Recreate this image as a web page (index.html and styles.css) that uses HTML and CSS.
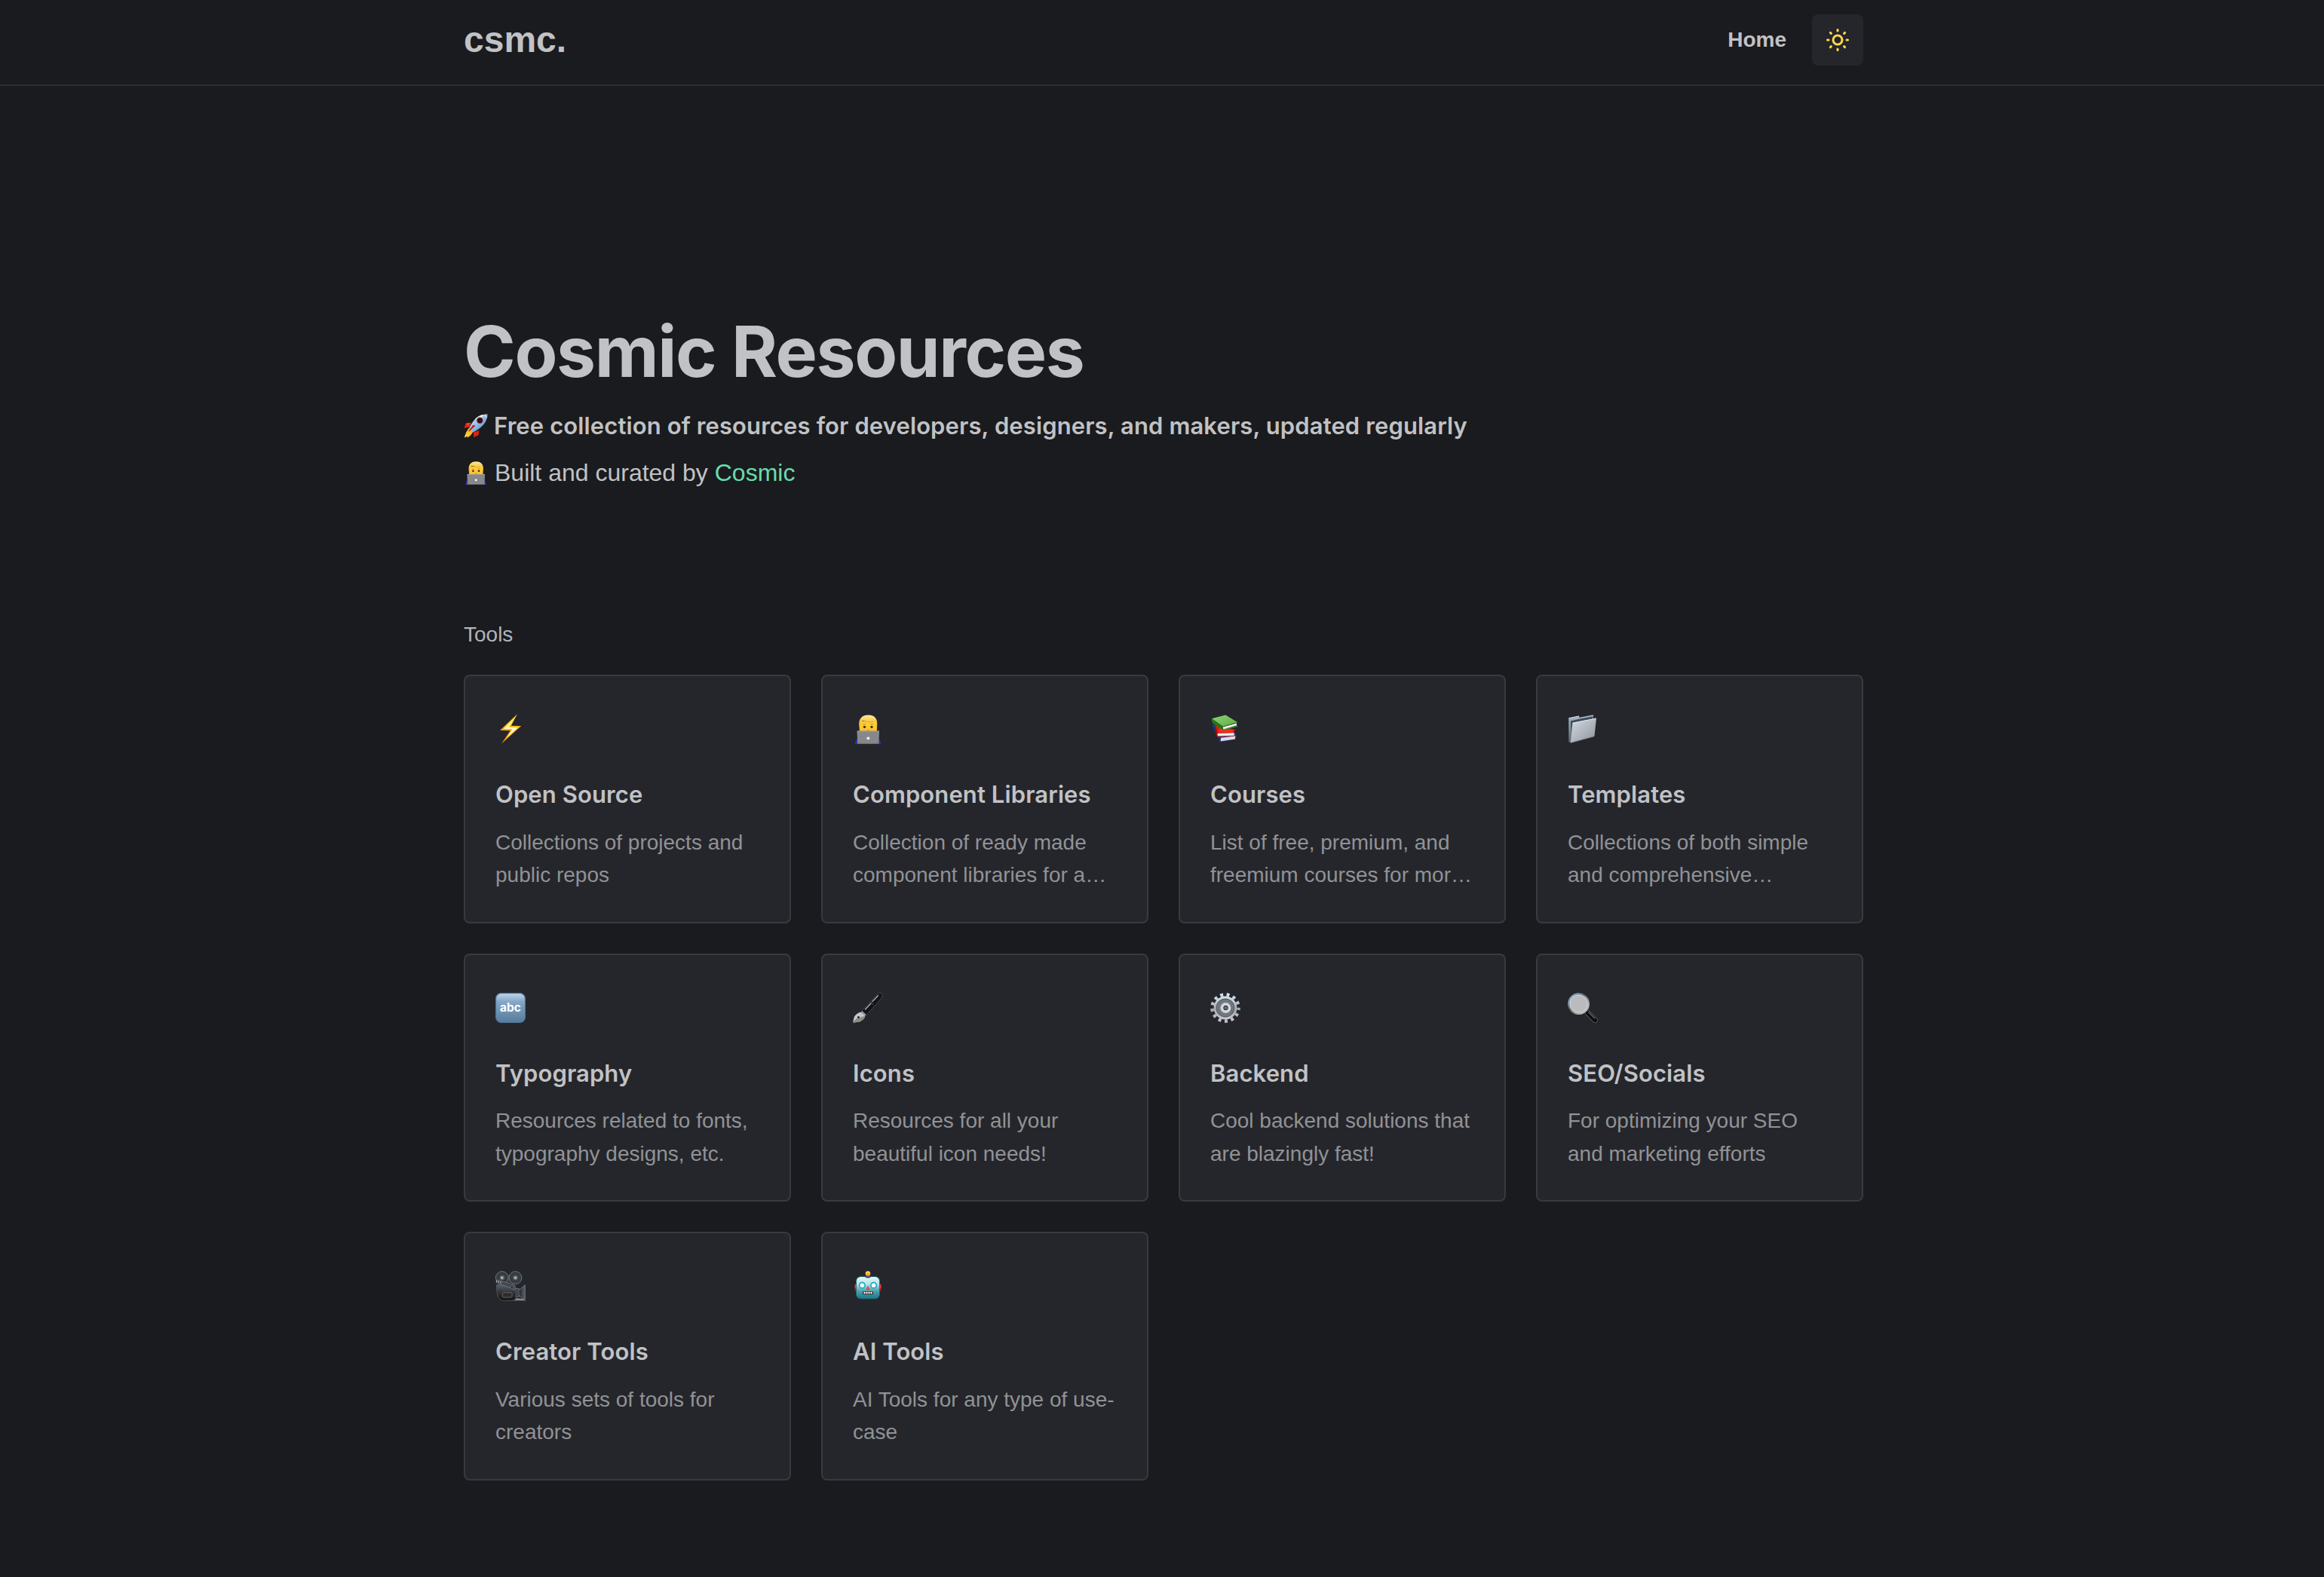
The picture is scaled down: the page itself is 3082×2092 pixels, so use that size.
FILE: index.html
```html
<!DOCTYPE html>
<html lang="en">
<head>
<meta charset="utf-8">
<title>Cosmic Resources</title>
<link rel="stylesheet" href="styles.css">
</head>
<body>
<svg class="defs" width="0" height="0" aria-hidden="true">
  <defs>
    <linearGradient id="hair" x1="0" y1="0" x2="0" y2="1"><stop offset="0" stop-color="#ffe9a0"/><stop offset=".35" stop-color="#fbd35c"/><stop offset="1" stop-color="#eda51c"/></linearGradient>
    <linearGradient id="face" x1="0" y1="0" x2="0" y2="1"><stop offset="0" stop-color="#ffd23c"/><stop offset="1" stop-color="#fbb91f"/></linearGradient>
    <linearGradient id="bolt" x1="0" y1="0" x2="0" y2="1"><stop offset="0" stop-color="#ffd21f"/><stop offset="1" stop-color="#ff9500"/></linearGradient>
    <linearGradient id="green" x1="0" y1="0" x2="1" y2="1"><stop offset="0" stop-color="#8fcf76"/><stop offset="1" stop-color="#5cb043"/></linearGradient>
    <linearGradient id="folder" x1="0" y1="0" x2="1" y2="1"><stop offset="0" stop-color="#d3dae2"/><stop offset=".5" stop-color="#b3b8c0"/><stop offset="1" stop-color="#8c9197"/></linearGradient>
    <linearGradient id="folderback" x1="0" y1="0" x2="0" y2="1"><stop offset="0" stop-color="#a9b8c4"/><stop offset="1" stop-color="#56646f"/></linearGradient>
    <linearGradient id="abc" x1="0" y1="0" x2="0" y2="1"><stop offset="0" stop-color="#c3d8e8"/><stop offset=".27" stop-color="#86a9c8"/><stop offset=".6" stop-color="#6f94b6"/><stop offset="1" stop-color="#5b7b98"/></linearGradient>
    <linearGradient id="steel" x1="0" y1="0" x2="0" y2="1"><stop offset="0" stop-color="#d2dfe8"/><stop offset=".55" stop-color="#a5abb2"/><stop offset="1" stop-color="#c9c3cb"/></linearGradient>
    <linearGradient id="rim" x1="0" y1="0" x2="1" y2="1"><stop offset="0" stop-color="#8fc0e8"/><stop offset=".4" stop-color="#6b7178"/><stop offset="1" stop-color="#d9d4cf"/></linearGradient>
    <linearGradient id="camera" x1="0" y1="0" x2="0" y2="1"><stop offset="0" stop-color="#5d656e"/><stop offset=".5" stop-color="#30353a"/><stop offset="1" stop-color="#180f0e"/></linearGradient>
    <linearGradient id="horn" x1="0" y1="0" x2="1" y2="0"><stop offset="0" stop-color="#22262b"/><stop offset="1" stop-color="#59616a"/></linearGradient>
    <linearGradient id="robot" x1="0" y1="0" x2="0" y2="1"><stop offset="0" stop-color="#e2fbf8"/><stop offset=".35" stop-color="#b4e2e2"/><stop offset=".65" stop-color="#4fa0ac"/><stop offset="1" stop-color="#1b7686"/></linearGradient>
    <linearGradient id="bulb" x1="0" y1="0" x2="0" y2="1"><stop offset="0" stop-color="#ffe55c"/><stop offset="1" stop-color="#f08a10"/></linearGradient>
    <linearGradient id="hull" x1="0" y1="0" x2="1" y2="1"><stop offset="0" stop-color="#dfe8ef"/><stop offset=".45" stop-color="#9cc4e6"/><stop offset="1" stop-color="#3474b4"/></linearGradient>
    <linearGradient id="flame" x1="1" y1="0" x2="0" y2="1"><stop offset="0" stop-color="#ff9d1c"/><stop offset="1" stop-color="#ffe14a"/></linearGradient>
    <symbol id="technologist" viewBox="0 0 40 40">
      <path d="M3 40c.3-4 1.600-7 4.500-8h25c3 1 4.200 4 4.700 8z" fill="#2733c9"/>
      <path d="M8.800 10h23.200v10.500c0 4-4 7-11.700 7S8.800 24.500 8.800 20.500z" fill="url(#face)"/>
      <path d="M8.600 18.500C6.800 7 11.500 1.500 20.500 1.500S33.800 7 32 18.500l-1.200-5.500c-.5-2-1.800-2.600-3.800-2.500-5.300.2-10-.3-14-1.600-1.600 1.600-2.500 4.500-4.400 9.600z" fill="url(#hair)"/>
      <path d="M13 9.100c4 1.400 9 1.900 14.500 1.600" fill="none" stroke="#cf8d15" stroke-width=".6"/>
      <circle cx="15.500" cy="17.300" r="1.600" fill="#3b2408"/><circle cx="25" cy="17.300" r="1.600" fill="#3b2408"/>
      <path d="M13.500 14.200q1.900-1.200 3.600-.3M23.500 13.900q1.900-1 3.600.3" fill="none" stroke="#a86c10" stroke-width=".7"/>
      <path d="M18.600 22h3.400" stroke="#c87420" stroke-width=".8"/>
      <path d="M6.500 22.500h27.500q1.200 0 1.100 1.200L34.300 40H6.300L5.500 23.700q-.1-1.200 1-1.200z" fill="#87888b"/>
      <path d="M6 23h29" stroke="#a3a4a7" stroke-width="1"/><path d="M6.300 39.400h28" stroke="#6c6d70" stroke-width="1.200"/>
      <circle cx="20.400" cy="32.300" r="1.900" fill="#f5f5f6"/>
    </symbol>
  </defs>
</svg>

<header class="header">
  <div class="container header-inner">
    <a class="logo">csmc.</a>
    <nav class="nav">
      <a class="nav-link">Home</a>
      <button class="theme-toggle" aria-label="Toggle theme">
        <svg class="sun" viewBox="0 0 24 24" fill="none" stroke="currentColor" stroke-width="2" stroke-linecap="round" stroke-linejoin="round"><circle cx="12" cy="12" r="4"/><path d="M3 12h1m8-9v1m8 8h1m-9 8v1M5.600 5.600l.7.7m12.100-.7l-.7.7m0 11.400l.7.7m-12.100-.7l-.7.7"/></svg>
      </button>
    </nav>
  </div>
</header>

<main class="container">
  <section class="hero">
    <h1 class="title">Cosmic Resources</h1>
    <p class="lead">
      <svg class="inline-icon" viewBox="0 0 40 40">
        <path d="M12 14.500L3.500 16 .5 23.500l9-1.500zM25.500 27.500L24.500 35l-7.800 4-.5-8z" fill="#e8200f"/>
        <path d="M3.500 16l7-.8-3 3.600z" fill="#ff5a2a"/>
        <path d="M8.500 23.500L4 30.500.8 39.500l5.400-2.200-.4 2.400 5.600-4 4.600-6.700z" fill="url(#flame)"/>
        <path d="M39.500.5C31 .5 23.500 3.500 18.500 9c-4 4.500-7.500 9.500-9.500 15l6.500 6.500c6.500-3 12-6.500 16-11C36.500 14 39 8 39.500.5z" fill="url(#hull)"/>
        <path d="M18.500 9C22 5 27 2.300 32 1.300c0 3-1.200 4.700-3 4.500-3.500.2-7 1.700-10.500 3.200z" fill="#eef1f3"/>
        <path d="M19.500 19.500L9 29.500l-1-1.200 7.500-10z" fill="#c4180c"/>
        <circle cx="26.700" cy="11" r="5.300" fill="#b9151a"/><circle cx="26.700" cy="11" r="4" fill="#131923"/>
        <path d="M34 1.500l4.800 5" stroke="#d3e5f2" stroke-width="1.500"/>
      </svg>
      <span>Free collection of resources for developers, designers, and makers, updated regularly</span>
    </p>
    <p class="byline">
      <svg class="inline-icon"><use href="#technologist"/></svg>
      <span>Built and curated by <a class="link">Cosmic</a></span>
    </p>
  </section>

  <section>
    <h2 class="section-label">Tools</h2>
    <div class="grid">
      <article class="card">
        <svg class="icon" viewBox="0 0 40 40"><path d="M28.800.4L6.200 21.800l13.600.4L8 39.400 34.200 16l-13.300-.3z" fill="url(#bolt)"/><path d="M24.500 6.500L11 19.800l11.900.5-8.400 11.900L29.800 18l-12-.3z" fill="#fffbd0"/><path d="M24.500 6.500L12.700 18.500l5.100-.8z" fill="#fff27a"/></svg>
        <h3 class="card-title">Open Source</h3>
        <p class="card-text">Collections of projects and public repos</p>
      </article>
      <article class="card">
        <svg class="icon"><use href="#technologist"/></svg>
        <h3 class="card-title">Component Libraries</h3>
        <p class="card-text">Collection of ready made component libraries for a…</p>
      </article>
      <article class="card">
        <svg class="icon" viewBox="0 0 40 40">
          <path d="M2.500 15L7 13l5 16 21-3.500 1 2-1.500 1.500.8 4.700L13 37z" fill="#2549a8"/><path d="M13.500 32l20-2.800-.6 4.200L14 36.200z" fill="#dcdcdf"/><path d="M2.500 15l3-1 8.500 18-1 5z" fill="#1a3580"/>
          <path d="M7 14.500l26 6.500-1.500 2.500.6 6L9 30.200z" fill="#d81c12"/><path d="M9.500 26l22-.8v3.600l-22 .4z" fill="#ececee"/><path d="M7 14.500l2.500 11V30L7.500 28z" fill="#9c110b"/><path d="M12 19l19 2.500-1 2.500-19 .8z" fill="#f0301f"/>
          <path d="M2 7L15.500 12l.5 9L3.500 12.500Q1.500 9.500 2 7z" fill="#2b7a1d"/>
          <path d="M16.500 17.500L35 12.500v2.700L17.500 20.500z" fill="#f2f2f2"/>
          <path d="M2 6.200L20.300 1.500 36.300 11.300 17 16.700z" fill="url(#green)"/>
          <path d="M2 6.200l15 10.500v4.800L3.800 12.500Q1.500 9 2 6.200z" fill="#277519"/><path d="M17 21.300l19.400-5.100" stroke="#3b9128" stroke-width="1.300"/><path d="M17 16.700l19-5.200" stroke="#2f811f" stroke-width="1"/>
        </svg>
        <h3 class="card-title">Courses</h3>
        <p class="card-text">List of free, premium, and freemium courses for mor…</p>
      </article>
      <article class="card">
        <svg class="icon" viewBox="0 0 40 40">
          <path d="M1.300 5.800L15 3l.8 1.700L34 1.300V8L5 38.500 1.300 37.500z" fill="url(#folderback)"/><path d="M4 9.500l11.500-2.800 18-3.500V9L5 33z" fill="#3c4c59"/><path d="M1.300 5.800L15 3" stroke="#dce4ea" stroke-width="1"/>
          <path d="M6.400 12.600q.1-.9 1-1.100L37 5.700q1-.1.900.9L35.600 28.700q-.2 1.100-1.200 1.400L4.800 38.300q-1 .2-.9-.8z" fill="url(#folder)"/><path d="M6.400 12.300L37.800 6" stroke="#e9eff4" stroke-width=".8"/><path d="M4 38.200l30.500-8.300" stroke="#868a8e" stroke-width="1"/>
        </svg>
        <h3 class="card-title">Templates</h3>
        <p class="card-text">Collections of both simple and comprehensive…</p>
      </article>
      <article class="card">
        <svg class="icon" viewBox="0 0 40 40"><rect x=".6" y=".6" width="38.800" height="38.800" rx="7" fill="url(#abc)" stroke="#4c769d" stroke-width="1.200"/><text class="abc-label" x="20" y="25" text-anchor="middle">abc</text></svg>
        <h3 class="card-title">Typography</h3>
        <p class="card-text">Resources related to fonts, typography designs, etc.</p>
      </article>
      <article class="card">
        <svg class="icon" viewBox="0 0 40 40">
          <path d="M12 24L31 3.500Q34.500-.1 38.500.4q1.800 3-.8 7L18 29.500z" fill="#111315" stroke="#5f666c" stroke-width=".6"/>
          <path d="M16.500 22L24 14M26 11.500L33.500 3.800" stroke="#a9b2b9" stroke-width="1.400" stroke-linecap="round"/><path d="M23.300 12l4.200 4" stroke="#6c7278" stroke-width=".9"/>
          <path d="M12.500 24.200l5 4.900-1.500 1.400-5-4.900z" fill="#9aa1a6"/>
          <path d="M10.600 25.500l5.800 5.300Q15.500 35 9.500 38.300L.6 39.700.4 38l1.400-6Q4.500 27 10.600 25.500z" fill="#c3c7ca"/><path d="M16.400 30.800Q15.500 35 9.500 38.300L.6 39.700 8 33z" fill="#918a83"/><path d="M1 39l6.300-6.200" stroke="#43474a" stroke-width=".8"/><circle cx="7.500" cy="32.500" r="1.400" fill="#24272a"/>
        </svg>
        <h3 class="card-title">Icons</h3>
        <p class="card-text">Resources for all your beautiful icon needs!</p>
      </article>
      <article class="card">
        <svg class="icon" viewBox="0 0 40 40">
          <circle cx="20" cy="20" r="17.500" fill="none" stroke="url(#steel)" stroke-width="4.600" stroke-dasharray="3.900 4.558" stroke-dashoffset="1"/>
          <circle cx="20" cy="20" r="14" fill="#858b92" stroke="url(#steel)" stroke-width="2.800"/>
          <circle cx="20" cy="20" r="11.500" fill="#7e858c" stroke="#555b62" stroke-width="1.300"/><circle cx="20" cy="20" r="9" fill="none" stroke="#5f656c" stroke-width="1.200"/>
          <circle cx="20.500" cy="20" r="5" fill="#3d4248" stroke="#d3d8dd" stroke-width="3.600"/><circle cx="20.500" cy="20" r="1.600" fill="#777d84"/>
        </svg>
        <h3 class="card-title">Backend</h3>
        <p class="card-text">Cool backend solutions that are blazingly fast!</p>
      </article>
      <article class="card">
        <svg class="icon" viewBox="0 0 40 40">
          <path d="M23 23.500l4.500 4.500" stroke="#a2a6aa" stroke-width="2.600"/>
          <path d="M26.500 26.500l9.800 10" stroke="#6c7075" stroke-width="6.800" stroke-linecap="round"/><path d="M26.500 26.500l9.800 10" stroke="#0b0c0e" stroke-width="5.600" stroke-linecap="round"/><path d="M27.500 25.500l8 8.200" stroke="#596067" stroke-width="1.500" stroke-linecap="round"/>
          <circle cx="14.600" cy="14.600" r="13.300" fill="#b9bbbd" stroke="url(#rim)" stroke-width="2.300"/><circle cx="14.600" cy="14.600" r="11.600" fill="none" stroke="#d9dadb" stroke-width=".8"/>
        </svg>
        <h3 class="card-title">SEO/Socials</h3>
        <p class="card-text">For optimizing your SEO and marketing efforts</p>
      </article>
      <article class="card">
        <svg class="icon" viewBox="0 0 40 40">
          <path d="M15 5h8v11h-8z" fill="#363b40"/>
          <circle cx="8.800" cy="9" r="8.400" fill="#373c41" stroke="#73797f" stroke-width=".9"/><circle cx="26.500" cy="9" r="8.400" fill="#373c41" stroke="#73797f" stroke-width=".9"/>
          <circle cx="8.800" cy="9" r="3" fill="#6f757b"/><circle cx="26.500" cy="9" r="3" fill="#6f757b"/><circle cx="8.800" cy="9" r="1.100" fill="#e5e8ea"/><circle cx="26.500" cy="9" r="1.100" fill="#e5e8ea"/>
          <path d="M22 35.500l17 1.800v2H12z" fill="#878b90"/>
          <path d="M26.500 23.500h5v10.500h-5z" fill="#3b4147" stroke="#80868c" stroke-width=".7"/>
          <path d="M31 25.500l8.300-7v20.800L31 32z" fill="url(#horn)" stroke="#747a80" stroke-width=".8"/>
          <path d="M1.500 18.500l8-1.300L24 20.500l3 4v13l-4 1.800H10q-5-1-7-6.500Q1 26 1.500 18.500z" fill="url(#camera)" stroke="#565b60" stroke-width=".8"/>
          <path d="M2 11.800L23.500 18q3.500 1.300 3.500 4.500l-2 3-4-3L1 15.500z" fill="#41474d" stroke="#747a80" stroke-width=".8"/><path d="M1 13.500l8 2.200" stroke="#d6d9db" stroke-width="1.400" stroke-dasharray="1.300 1.500"/><circle cx="22" cy="22" r="2" fill="#2a2e32" stroke="#747a80" stroke-width=".7"/>
          <rect x="9.500" y="28.700" width="12.500" height="6.300" rx="1" fill="#2d2b2b" stroke="#69696b" stroke-width=".9"/>
        </svg>
        <h3 class="card-title">Creator Tools</h3>
        <p class="card-text">Various sets of tools for creators</p>
      </article>
      <article class="card">
        <svg class="icon" viewBox="0 0 40 40">
          <rect x="2.500" y="16.500" width="35" height="10.500" rx="2.500" fill="#b31c20"/><path d="M3.300 18v5M36.700 18v5" stroke="#f0484b" stroke-width="1.200"/>
          <path d="M15.800 9q0-3.500 4.200-3.500t4.200 3.500z" fill="#5c3e8b"/><circle cx="20" cy="3.600" r="3.300" fill="url(#bulb)"/>
          <rect x="4.500" y="7.500" width="31" height="29.500" rx="6" fill="url(#robot)" stroke="#176270" stroke-width=".8"/><path d="M15.500 7.200h9q-1 2.400-4.500 2.400t-4.500-2.400z" fill="#5c3e8b"/>
          <circle cx="12.400" cy="19" r="3.700" fill="#fff" stroke="#18a9cf" stroke-width="1.700"/><circle cx="27.600" cy="19" r="3.700" fill="#fff" stroke="#18a9cf" stroke-width="1.700"/>
          <path d="M20 19.300l2.900 6h-5.800z" fill="#e5484b"/>
          <rect x="13" y="27" width="14" height="4.200" rx="1.500" fill="#3f2424"/><path d="M14.500 29.100h11.500" stroke="#fff" stroke-width="2.500" stroke-dasharray="2 1"/>
        </svg>
        <h3 class="card-title">AI Tools</h3>
        <p class="card-text">AI Tools for any type of use-case</p>
      </article>
    </div>
  </section>
</main>
</body>
</html>
```
FILE: styles.css
```css
* {
  box-sizing: border-box;
  margin: 0;
  padding: 0;
}

body {
  min-height: 100vh;
  background: #1a1b1e;
  color: #c1c2c5;
  font-family: "Liberation Sans", Helvetica, Arial, sans-serif;
  font-size: 32px;
  line-height: 50px;
}

svg {
  display: block;
  flex: none;
}

.defs {
  position: absolute;
}

.container {
  width: 1856px;
  margin-left: 615px;
}

.header {
  height: 114px;
  padding-bottom: 6px;
  border-bottom: 2px solid #2c2e33;
}

.header-inner {
  height: 106px;
  display: flex;
  align-items: center;
  justify-content: space-between;
}

.logo {
  font-size: 48px;
  font-weight: 700;
}

.nav {
  display: flex;
  align-items: center;
  gap: 34px;
}

.nav-link {
  font-size: 28px;
  font-weight: 700;
}

.theme-toggle {
  display: grid;
  place-items: center;
  width: 68px;
  height: 68px;
  border: 0;
  border-radius: 8px;
  background: #25262b;
  color: #ffd84f;
}

.sun {
  width: 36px;
  height: 36px;
}

.hero {
  padding: 290px 0 168px;
}

.title {
  margin-bottom: 11px;
  font-family: Inter, sans-serif;
  font-size: 93px;
  font-weight: 700;
  line-height: 125px;
  letter-spacing: -1.4px;
}

.lead,
.byline {
  display: flex;
  align-items: center;
}

.lead {
  gap: 8px;
  margin-bottom: 12px;
  font-family: Inter, sans-serif;
  font-size: 31px;
  font-weight: 600;
  letter-spacing: 0.115px;
}

.byline {
  gap: 9px;
}

.inline-icon {
  width: 32px;
  height: 32px;
}

.link {
  color: #69dbac;
}

.section-label {
  margin-bottom: 32px;
  color: #adb5bd;
  font-size: 28px;
  font-weight: 400;
  line-height: 43px;
}

.grid {
  display: grid;
  grid-template-columns: repeat(4, 434px);
  grid-auto-rows: 329.5px;
  gap: 40px;
}

.card {
  padding: 50px 40px 40px;
  border: 2px solid #373a40;
  border-radius: 8px;
  background: #25262b;
}

.icon {
  width: 40px;
  height: 40px;
  margin-bottom: 42px;
}

.card-title {
  margin-bottom: 16.6px;
  font-family: Inter, sans-serif;
  font-size: 31px;
  font-weight: 600;
  letter-spacing: 0.1px;
}

.card-text {
  color: #909296;
  font-size: 28px;
  line-height: 43.4px;
}

.abc-label {
  fill: #fff;
  font-family: Inter, sans-serif;
  font-size: 15.5px;
  font-weight: 700;
}
```
